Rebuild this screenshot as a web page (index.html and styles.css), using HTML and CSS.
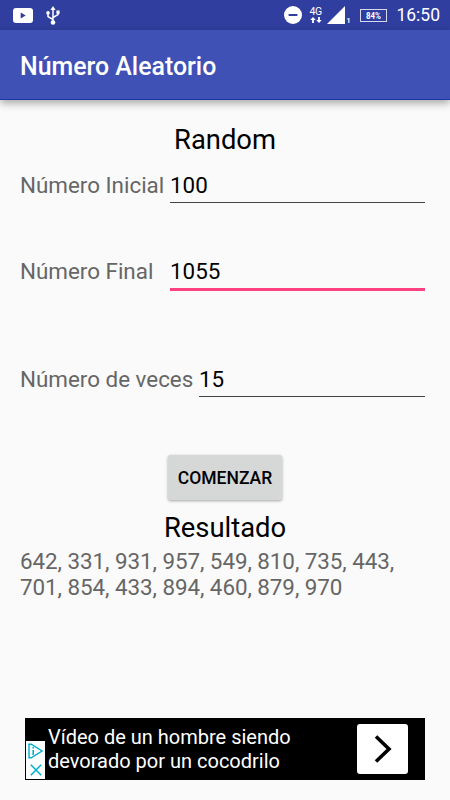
FILE: index.html
```html
<!DOCTYPE html>
<html lang="es">
<head>
<meta charset="utf-8">
<title>Número Aleatorio</title>
<link rel="stylesheet" href="styles.css">
</head>
<body>
<div class="status">
  <svg class="youtube" width="20" height="15" viewBox="0 0 20 15"><rect width="20" height="15" rx="3" fill="#fff"/><path d="M7.7 4.5v6l5-3z" fill="#303f9f"/></svg>
  <svg class="usb" width="14" height="19" viewBox="0 0 14 19"><path d="M7 3v13M2 8v2.6L7 13.5M12 6v2.6L7 11.5" fill="none" stroke="#fff" stroke-width="1.5"/><path d="M7 0l2.6 4H4.4zM10.4 4.5h3.2v3.2h-3.2z" fill="#fff"/><circle cx="2" cy="6.9" r="1.8" fill="#fff"/><circle cx="7" cy="16.5" r="2.3" fill="#fff"/></svg>
  <svg class="dnd" width="18" height="18" viewBox="0 0 18 18"><circle cx="9" cy="9" r="9" fill="#fff"/><path d="M4.6 9h8.8" stroke="#303f9f" stroke-width="2"/></svg>
  <div class="network"><span>4G</span><svg width="12" height="6" viewBox="0 0 12 6"><path d="M3 0l2.8 3H3.9v3H2.1V3H.2zM9 6L6.2 3h1.9V0h1.8v3h1.9z" fill="#fff"/></svg></div>
  <svg class="signal" width="18" height="18" viewBox="0 0 18 18"><path d="M18 0v18H0z" fill="#fff"/></svg>
  <span class="sim">1</span>
  <span class="battery"><span>84%</span></span>
  <span class="clock">16:50</span>
</div>
<header class="appbar"><h1>Número Aleatorio</h1></header>
<main>
  <h2 class="random">Random</h2>
  <div class="row first"><label>Número Inicial</label><div class="field">100</div></div>
  <div class="row second"><label>Número Final</label><div class="field focused">1055</div></div>
  <div class="row third"><label>Número de veces</label><div class="field">15</div></div>
  <button>COMENZAR</button>
  <h2>Resultado</h2>
  <p class="result">642, 331, 931, 957, 549, 810, 735, 443,<br>701, 854, 433, 894, 460, 879, 970</p>
</main>
<aside class="ad">
  <div class="choices">
    <svg width="15" height="16" viewBox="0 0 15 16"><path d="M1 1.2v13.6h2.2L14 8 3.2 1.2z" fill="none" stroke="#00aecd" stroke-width="1.4"/><path d="M5.2 7v5M5.2 4v1.6" stroke="#00aecd" stroke-width="1.6"/></svg>
    <svg width="12" height="12" viewBox="0 0 12 12"><path d="M.8.8l10.4 10.4M11.2.8L.8 11.2" stroke="#00aecd" stroke-width="1.5"/></svg>
  </div>
  <p>Vídeo de un hombre siendo<br>devorado por un cocodrilo</p>
  <div class="go"><svg width="18" height="28" viewBox="0 0 18 28"><path d="M2 1.5L15 14 2 26.5" fill="none" stroke="#000" stroke-width="3.6"/></svg></div>
</aside>
</body>
</html>
```
FILE: styles.css
```css
* { box-sizing: border-box; }
body {
  margin: 0;
  width: 450px;
  height: 800px;
  display: flex;
  flex-direction: column;
  background: #fafafa;
  font-family: Roboto, sans-serif;
  font-size: 22.4px;
  color: #000;
  overflow: hidden;
}
h1, h2, p { margin: 0; font-weight: 400; }
svg { display: block; flex: none; }
.status {
  height: 30px;
  flex: none;
  display: flex;
  align-items: center;
  padding: 0 10px 0 13px;
  background: #303f9f;
  color: #fff;
}
.usb { margin-left: 13px; }
.dnd { margin-left: auto; }
.network { width: 14px; margin-left: 7px; font-size: 10.5px; line-height: 10px; letter-spacing: -.3px; }
.network svg { margin-left: 1px; }
.signal { margin-left: 4px; }
.sim { width: 5px; margin: 11px 0 0 1px; font-size: 7px; font-weight: 700; line-height: 8px; }
.battery {
  width: 27px;
  height: 13px;
  margin-left: 9px;
  border: 1px solid #d6d9ee;
  font-size: 9.5px;
  font-weight: 700;
  line-height: 11px;
  text-align: center;
}
.battery span { display: block; transform: scaleX(.84); }
.clock { margin-left: 9px; font-size: 17.5px; line-height: 31px; }
.appbar {
  height: 70px;
  flex: none;
  padding-left: 20px;
  background: #3f51b5;
  border-bottom: 1px solid #1c37a8;
  box-shadow: 0 3px 8px rgba(0, 0, 0, .35);
  color: #fff;
}
h1 { font-size: 24.9px; font-weight: 500; line-height: 73px; }
main {
  display: flex;
  flex-direction: column;
  padding: 23px 25px 0 20px;
}
h2 { align-self: center; margin-left: 5px; font-size: 27.4px; line-height: 34px; }
.row { display: flex; height: 48px; color: #666; line-height: 57px; }
.row label { flex: none; width: 150px; white-space: nowrap; }
.field { flex: 1; height: 46px; border-bottom: 1px solid #444; color: #000; }
.focused { height: 48px; border-bottom: 3px solid #ff4081; }
.second { margin-top: 38px; }
.third { margin-top: 60px; }
.third label { width: 179px; }
button {
  align-self: center;
  width: 114px;
  height: 45px;
  margin: 56px 0 0 5px;
  padding: 0;
  border: 0;
  border-radius: 2.5px;
  background: #d6d7d7;
  box-shadow: 0 1px 3px rgba(0, 0, 0, .35);
  font: 500 17.5px/46px Roboto, sans-serif;
  color: #000;
}
button + h2 { margin-top: 11px; }
.result { margin-top: 3px; line-height: 26px; letter-spacing: -.05px; color: #666; white-space: nowrap; }
.ad {
  width: 400px;
  height: 62px;
  flex: none;
  display: flex;
  margin: auto 25px 20px;
  background: #000;
  color: #fff;
}
.choices {
  width: 19px;
  height: 38px;
  margin: 23px 0 0 1px;
  display: flex;
  flex-direction: column;
  align-items: center;
  gap: 5px;
  padding-top: 2px;
  background: #fff;
}
.ad p { margin: 7px 0 0 3px; font-size: 20px; line-height: 24px; white-space: nowrap; }
.go {
  width: 51px;
  height: 50px;
  margin: 6px 17px 0 auto;
  display: flex;
  align-items: center;
  justify-content: center;
  border-radius: 3px;
  background: #fff;
}
```
